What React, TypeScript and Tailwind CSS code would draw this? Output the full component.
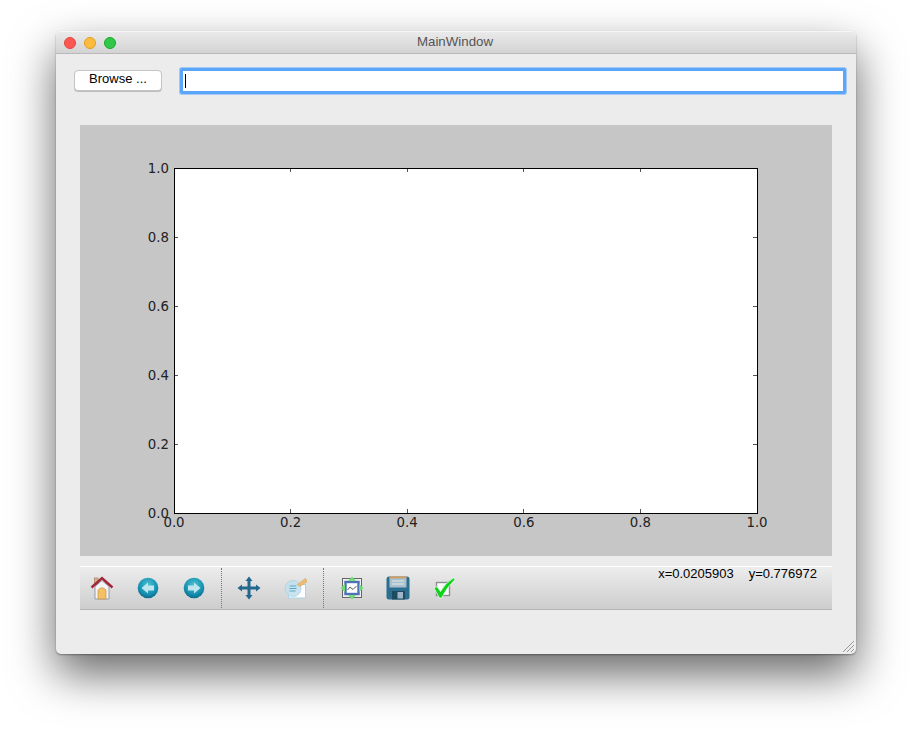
import React from "react";

const HomeIcon = () => (
  <svg width="24" height="24" viewBox="0 0 24 24">
    <rect x="4.500" y="2" width="3.500" height="7" fill="#d9b48f" stroke="#a67c5b" strokeWidth="0.7" />
    <path d="M5 10.500 L12 4.500 L19 10.500 V23 H5 Z" fill="#f4f4f4" stroke="#8f9cab" strokeWidth="1" />
    <path d="M8 23 V14 Q12 9.500 16 14 V23 Z" fill="#f3c063" stroke="#c9954a" strokeWidth="0.7" />
    <path d="M1.500 11.500 L12 2 L22.500 11.500" fill="none" stroke="#a32638" strokeWidth="2.400" />
  </svg>
);

const ArrowIcon = ({ flip }: { flip?: boolean }) => (
  <svg width="24" height="24" viewBox="0 0 24 24" style={flip ? { transform: "scaleX(-1)" } : undefined}>
    <defs>
      <radialGradient id={flip ? "gf" : "gb"} cx="50%" cy="35%" r="65%">
        <stop offset="0%" stopColor="#4fc3d3" />
        <stop offset="70%" stopColor="#1590b0" />
        <stop offset="100%" stopColor="#0d6a8c" />
      </radialGradient>
    </defs>
    <circle cx="12" cy="12" r="10.300" fill={`url(#${flip ? "gf" : "gb"})`} />
    <path d="M5.500 12 L12 6.500 V9.500 H18 V14.500 H12 V17.500 Z" fill="#bfe6ee" />
  </svg>
);

const MoveIcon = () => (
  <svg width="24" height="24" viewBox="0 0 24 24" fill="#22688c">
    <rect x="3" y="10.500" width="18" height="3" />
    <rect x="10.500" y="3" width="3" height="18" />
    <path d="M12 .5 L15.500 5 H8.500 Z M12 23.500 L8.500 19 H15.500 Z M.5 12 L5 8.500 V15.500 Z M23.500 12 L19 15.500 V8.500 Z" />
  </svg>
);

const EditIcon = () => (
  <svg width="24" height="24" viewBox="0 0 24 24">
    <rect x="5.500" y="8.500" width="17" height="13.500" fill="#fdfeff" stroke="#a9d3e6" />
    <circle cx="10" cy="12.500" r="8" fill="#c3e1ed" fillOpacity="0.9" stroke="#a8d0e0" strokeWidth="0.8" />
    <path d="M6.500 10 H13.500 M6.500 12.500 H13.500 M6.500 15 H12.500" stroke="#5fa5c2" strokeWidth="1" />
    <path d="M14.500 8.500 L22.500 2.500 L24 5.500 L17 10.500 Z" fill="#f0bd72" stroke="#d39a4c" strokeWidth="0.6" />
  </svg>
);

const SubplotsIcon = () => (
  <svg width="24" height="24" viewBox="0 0 24 24">
    <rect x="2.500" y="2.500" width="19" height="19" fill="#efefef" stroke="#666" strokeWidth="1" />
    <rect x="5.500" y="6" width="13" height="12" fill="#fff" stroke="#4f71b8" strokeWidth="2.400" />
    <path d="M7.500 14 L10 11 L13 13.500 L16.500 10" fill="none" stroke="#555" strokeWidth="1" />
    <path d="M12 .5 L16 5 H8 Z M12 23.500 L8 19 H16 Z M.5 12 L5 8 V16 Z M23.500 12 L19 16 V8 Z" fill="#6fdc78" />
  </svg>
);

const SaveIcon = () => (
  <svg width="24" height="24" viewBox="0 0 24 24">
    <rect x="0.500" y="0.500" width="23" height="23" rx="2.500" fill="#2a6f90" />
    <rect x="3.500" y="0.500" width="17" height="11" fill="#a9c0cd" />
    <rect x="3.500" y="0.500" width="17" height="1.800" fill="#d49a5a" />
    <path d="M6 5 H18 M6 8 H18" stroke="#e3ebef" strokeWidth="1.200" />
    <rect x="6" y="15" width="13" height="8.500" fill="#1f4a60" />
    <rect x="11.500" y="16" width="5.500" height="6.500" fill="#9db7c6" />
  </svg>
);

const CheckIcon = () => (
  <svg width="24" height="24" viewBox="0 0 24 24">
    <rect x="4.500" y="6.500" width="13" height="13" fill="#fafafa" stroke="#8f8f8f" strokeWidth="1.400" />
    <path d="M2 12 L5 10.500 L8.500 15.500 Q13 7 21.500 2 L23 3.500 Q15 11 9.500 22 H7.500 Z" fill="#0fd31b" stroke="#fff" strokeWidth="0.600" />
  </svg>
);

const ToolButton = ({ children }: { children: React.ReactNode }) => (
  <div className="flex w-[46px] items-center justify-center">{children}</div>
);

const xTicks = [0, 0.2, 0.4, 0.6, 0.8, 1];

// matplotlib axes, drawn in the panel's own coordinates
const Plot = () => {
  const left = 94;
  const top = 43;
  const w = 583;
  const h = 345;
  return (
    <svg width="752" height="431" className="block">
      <rect x={left} y={top} width={w} height={h} fill="#fff" />
      {xTicks.map((t) => {
        const x = left + t * w;
        const y = top + h - t * h;
        return (
          <g key={t}>
            <path
              d={`M${x} ${top + h} v-4 M${x} ${top} v4 M${left} ${y} h4 M${left + w} ${y} h-4`}
              stroke="#555"
              strokeWidth="1"
              fill="none"
              shapeRendering="crispEdges"
            />
            <text x={x} y={top + h + 14} textAnchor="middle" fontSize="13.300" fontFamily="'DejaVu Sans', sans-serif" fill="#222">
              {t.toFixed(1)}
            </text>
            <text x={left - 5} y={y + 4.5} textAnchor="end" fontSize="13.300" fontFamily="'DejaVu Sans', sans-serif" fill="#222">
              {t.toFixed(1)}
            </text>
          </g>
        );
      })}
      <rect x={left} y={top} width={w} height={h} fill="none" stroke="#000" strokeWidth="1" shapeRendering="crispEdges" />
    </svg>
  );
};

export default function App() {
  return (
    <div className="h-[734px] w-[912px] overflow-hidden bg-white pl-[56px] pt-[31px] font-['Liberation_Sans',sans-serif]">
      <div className="relative flex h-[623px] w-[800px] flex-col rounded-[5px] bg-[#ececec] shadow-[0_20px_45px_rgba(0,0,0,0.6),0_1px_2px_rgba(0,0,0,0.35)]">
        <div className="relative flex h-[23px] items-center justify-center rounded-t-[5px] border-b border-[#b9b9b9] bg-gradient-to-b from-[#ebebeb] to-[#d3d3d3] shadow-[inset_0_1px_0_#f6f6f6]">
          <div className="absolute left-[8px] top-[6px] flex gap-[8px]">
            <span className="size-[12px] rounded-full border border-[#e2463f] bg-[#fc5753]" />
            <span className="size-[12px] rounded-full border border-[#e1a116] bg-[#fdbc40]" />
            <span className="size-[12px] rounded-full border border-[#12ac28] bg-[#33c748]" />
          </div>
          <span className="-ml-[2px] text-[13.3px] leading-none text-[#555]">MainWindow</span>
        </div>

        <div className="flex items-start pl-[18px] pr-[10px] pt-[14px]">
          <button className="mt-[2px] h-[21px] w-[88px] rounded-[4px] border border-[#c4c4c4] bg-white pb-[5px] text-[13px] leading-none text-black shadow-[0_1px_0_#bdbdbd]">
            Browse ...
          </button>
          <div className="ml-[18px] flex h-[26px] flex-1 items-center rounded-[2px] border-[3px] border-[#5ba6fb] bg-white pl-[2px] shadow-[0_0_0_1px_rgba(91,166,251,0.5)]">
            <span className="h-[14px] w-px bg-black" />
          </div>
        </div>

        <div className="ml-[24px] mt-[31px] h-[431px] w-[752px] bg-[#c6c6c6]">
          <Plot />
        </div>

        <div className="ml-[24px] mt-[10px] flex h-[44px] w-[752px] items-start justify-between border-b border-[#b5b5b5] border-t border-t-white bg-gradient-to-b from-[#ededed] to-[#cdcdcd]">
          <div className="-ml-px flex h-full items-center">
            <ToolButton><HomeIcon /></ToolButton>
            <ToolButton><ArrowIcon /></ToolButton>
            <ToolButton><ArrowIcon flip /></ToolButton>
            <div className="mx-[4px] h-[40px] w-0 border-l border-dotted border-[#777]" />
            <ToolButton><MoveIcon /></ToolButton>
            <ToolButton><EditIcon /></ToolButton>
            <div className="mx-[5px] h-[40px] w-0 border-l border-dotted border-[#777]" />
            <ToolButton><SubplotsIcon /></ToolButton>
            <ToolButton><SaveIcon /></ToolButton>
            <ToolButton><CheckIcon /></ToolButton>
          </div>
          <div className="flex gap-[15px] pr-[15px] text-[13px] leading-[13px] text-black">
            <span>x=0.0205903</span>
            <span>y=0.776972</span>
          </div>
        </div>

        <svg width="13" height="13" viewBox="0 0 13 13" className="absolute bottom-[1px] right-[1px]">
          <path d="M1 12 L12 1 M5 12 L12 5 M9 12 L12 9" stroke="#9a9a9a" strokeWidth="1" />
        </svg>
      </div>
    </div>
  );
}
